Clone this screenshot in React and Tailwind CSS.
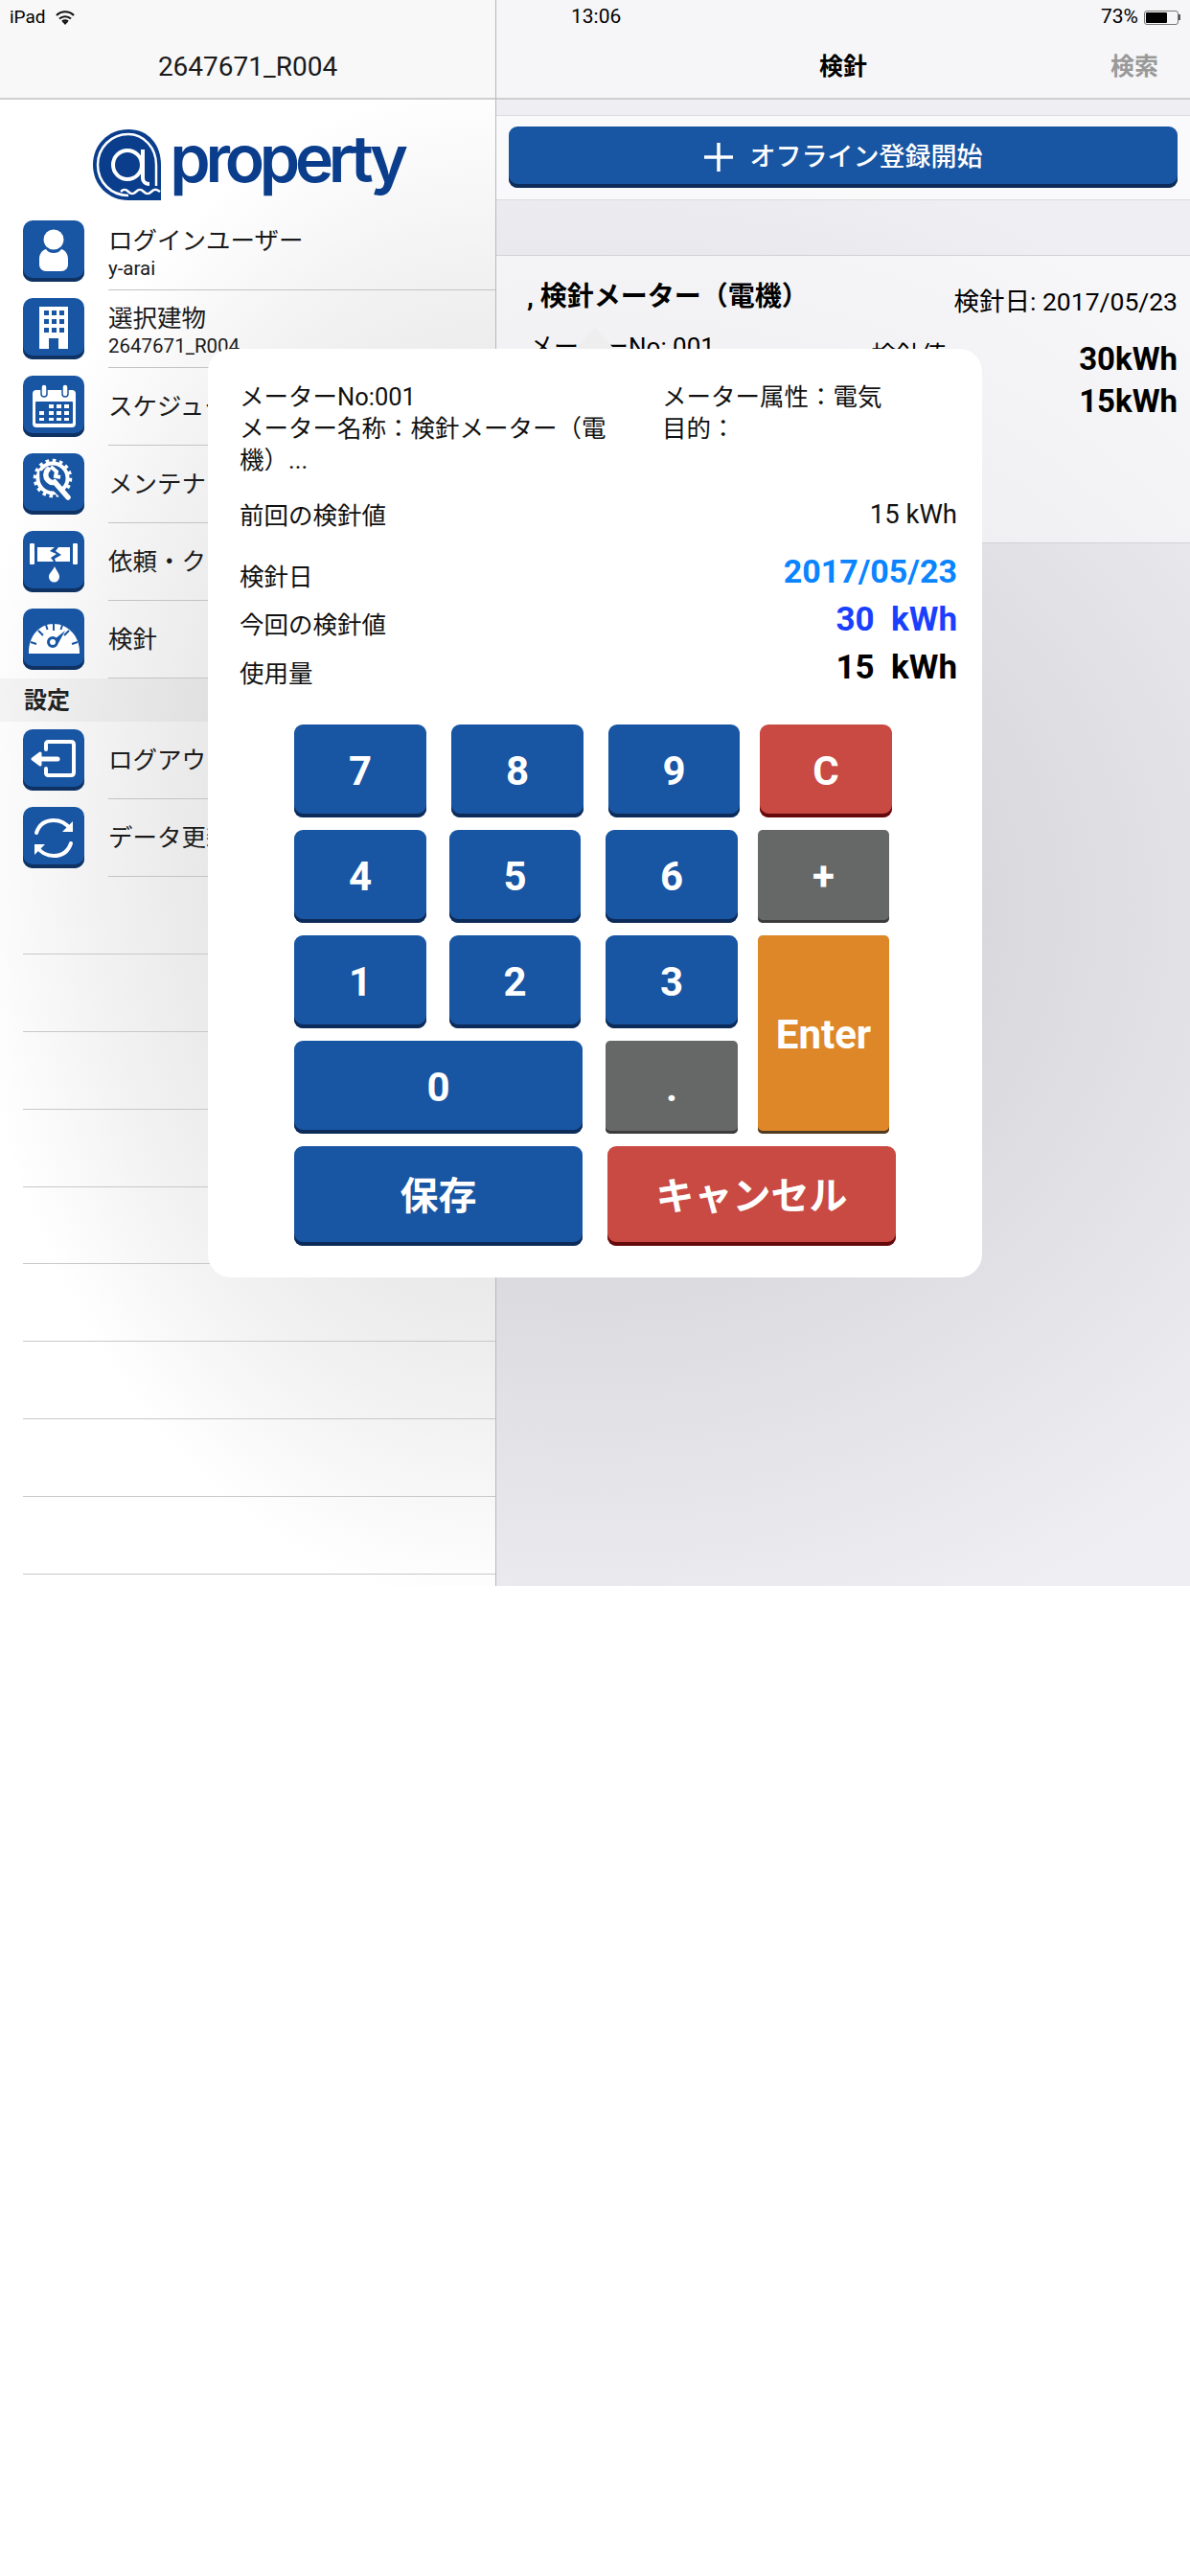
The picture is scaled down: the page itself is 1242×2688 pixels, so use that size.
const FONT = "font-['Roboto','Noto_Sans_CJK_JP',sans-serif]"

function IconBox({ children }) {
  return (
    <div className="w-16 h-16 shrink-0 rounded-[10px] bg-[#1855a3] shadow-[inset_0_-4px_0_#0f3263] overflow-hidden">
      <svg viewBox="0 0 64 64" className="w-16 h-16">{children}</svg>
    </div>
  )
}

const icons = {
  user: (
    <g fill="#fff">
      <circle cx="32" cy="20" r="10.5" />
      <path d="M24 30c2 3 5 4 8 4s6-1 8-4c4 1 7 5 7 10v6c0 4-3 7-7 7H24c-4 0-7-3-7-7v-6c0-5 3-9 7-10z" />
    </g>
  ),
  building: (
    <g>
      <path fill="#fff" d="M17 9h30v44H37V42H27v11H17z" />
      <path fill="#1855a3" d="M22 13h5v5h-5zM30 13h5v5h-5zM38 13h5v5h-5zM22 22h5v5h-5zM30 22h5v5h-5zM38 22h5v5h-5zM22 31h5v5h-5zM30 31h5v5h-5zM38 31h5v5h-5z" />
    </g>
  ),
  calendar: (
    <g>
      <rect x="10" y="15" width="45" height="39" rx="4" fill="#fff" />
      <rect x="13" y="27" width="39" height="23" rx="1" fill="#1855a3" />
      <rect x="19" y="9" width="6" height="13" rx="3" fill="#fff" stroke="#1855a3" strokeWidth="1.5" />
      <rect x="41" y="9" width="6" height="13" rx="3" fill="#fff" stroke="#1855a3" strokeWidth="1.5" />
      <path fill="#fff" d="M35 30h5v4h-5zM43 30h5v4h-5zM27 30h5v4h-5zM17 37h5v4h-5zM27 37h5v4h-5zM35 37h5v4h-5zM43 37h5v4h-5zM17 44h5v3h-5zM27 44h5v3h-5zM35 44h5v3h-5zM43 44h5v3h-5z" />
    </g>
  ),
  gear: (
    <g>
      <circle cx="31" cy="26" r="15.5" fill="none" stroke="#fff" strokeWidth="4" />
      <circle cx="31" cy="26" r="18.5" fill="none" stroke="#fff" strokeWidth="3.5" strokeDasharray="3.6 3.6" />
      <path d="M22 19c-1 5 1 9 5 11l3 1 16 16" fill="none" stroke="#1855a3" strokeWidth="9" />
      <path d="M26 17c-3 3-3 8 0 11 2 2 5 3 7 2l14 16" fill="none" stroke="#fff" strokeWidth="5.5" strokeLinecap="round" />
      <path d="M29 14l6 5-1 5 5 1" fill="none" stroke="#fff" strokeWidth="4" />
    </g>
  ),
  pipe: (
    <g fill="#fff">
      <rect x="7" y="13" width="5" height="22" rx="1" />
      <rect x="52" y="13" width="5" height="22" rx="1" />
      <path d="M15 17h18l-5 4 7 3-6 4 3 4H15zM37 17h12v15H34l-1-3 7-4-6-4z" />
      <path d="M33 37c2 5 5 7 5 11a5.200 5.200 0 01-11 0c0-4 4-6 6-11z" />
    </g>
  ),
  gauge: (
    <g>
      <path d="M6 45c0-16 11-29 26-29s27 13 27 29z" fill="#fff" />
      <path d="M6 46h53" stroke="#fff" strokeWidth="2" />
      <path d="M32 16v7M16 23l5 5M48 23l-5 5M8 35l6 2M57 35l-6 2M24 17l1.500 5M41 17l-1.500 5" stroke="#1855a3" strokeWidth="2" />
      <circle cx="31" cy="35" r="4.500" fill="none" stroke="#1855a3" strokeWidth="3" />
      <path d="M33 32l11-9-7 13z" fill="#1855a3" />
    </g>
  ),
  logout: (
    <g fill="none" stroke="#fff" strokeWidth="4" strokeLinecap="round" strokeLinejoin="round">
      <path d="M24 21v-6c0-1 1-2 2-2h24c2 0 3 1 3 3v29c0 2-1 3-3 3H26c-1 0-2-1-2-2v-5" />
      <path d="M36 31H14" strokeWidth="5" />
      <path d="M18 25l-8 6 8 6z" fill="#fff" strokeWidth="3" />
    </g>
  ),
  refresh: (
    <g fill="none" stroke="#fff" strokeWidth="4" strokeLinecap="round">
      <path d="M14 27c3-9 10-13 18-13 7 0 13 3 17 9" />
      <path d="M50 38c-3 9-10 13-18 13-7 0-13-3-17-9" />
      <path d="M52 15v11H41z" fill="#fff" stroke="none" />
      <path d="M12 50V39h11z" fill="#fff" stroke="none" />
    </g>
  ),
}

function MenuRow({ icon, label, sub }) {
  return (
    <div className="flex h-[81px] pl-6">
      <div className="pt-2"><IconBox>{icons[icon]}</IconBox></div>
      <div className="ml-[25px] flex-1 border-b border-[#c4c4c4] flex flex-col justify-center">
        {sub ? (
          <div className="mt-[1px]">
            <div className="text-[25.5px] leading-[34px] text-[#1a1a1a]">{label}</div>
            <div className="text-[20.5px] leading-[24px] text-[#1a1a1a]">{sub}</div>
          </div>
        ) : (
          <div className="text-[25.5px] leading-[34px] text-[#1a1a1a]">{label}</div>
        )}
      </div>
    </div>
  )
}

function Key({ label, className }) {
  return (
    <button className={'flex items-center justify-center rounded-[9px] text-white font-bold text-[42px] ' + className}>
      {label}
    </button>
  )
}

const BLUE = 'bg-[#1855a3] shadow-[inset_0_-4px_0_#0d2b58]'
const RED = 'bg-[#c84a42] shadow-[inset_0_-4px_0_#650a0c]'
const GREY = 'bg-[#666867] shadow-[inset_0_-3px_0_#3c3c3c] !rounded-[5px]'
const ORANGE = 'bg-[#de8728] shadow-[inset_0_-3px_0_#4f3a22] !rounded-[5px]'

export default function App() {
  return (
    <div className={'relative bg-white min-h-screen ' + FONT}>
      <div className="flex h-[1655px] text-black">
        {/* side menu */}
        <div className="w-[518px] shrink-0 border-r border-[#b8b8b8] bg-[radial-gradient(ellipse_560px_800px_at_520px_880px,#e2e2e2_40%,#f3f3f3_78%,#ffffff_100%)]">
          <div className="h-[104px] bg-[#f8f8f8] border-b-2 border-[#d0d0d0] relative">
            <div className="h-[36px] flex items-center pl-[10px] gap-[10px] text-[19px]">
              <span>iPad</span>
              <svg viewBox="0 0 20 15" className="w-5 h-[15px]" fill="none" stroke="#111" strokeWidth="2.200">
                <path d="M1 5c5-5 13-5 18 0M4 8.500c3.500-3 8.500-3 12 0M7 11.500c2-1.500 4-1.500 6 0" />
                <path d="M10 15l-2.500-3c1.500-1 3.500-1 5 0z" fill="#111" stroke="none" />
              </svg>
            </div>
            <div className="text-center text-[28px] leading-[36px] mt-[16px] text-[#1a1a1a]">2647671_R004</div>
          </div>
          <div className="h-[118px] flex items-start justify-center pt-[30px]">
            <svg viewBox="0 0 76 76" className="w-[76px] h-[76px] shrink-0">
              <path d="M38 1C17 1 1 17 1 38s16 37 37 37h34V38C72 17 59 1 38 1z" fill="#0a3d8c" />
              <path d="M67 60V38C67 20 54 6 38 6 20 6 6 20 6 38s14 32 32 32" fill="none" stroke="#fff" strokeWidth="2.500" />
              <circle cx="37" cy="38" r="15" fill="none" stroke="#fff" strokeWidth="4" />
              <path d="M53 22v30c0 4 3 6 7 6" fill="none" stroke="#fff" strokeWidth="4" />
              <path d="M30 66c3-3 5-3 8 0s5 3 8 0 5-3 8 0 5 3 8 0 5-3 9 0" fill="none" stroke="#fff" strokeWidth="2.500" />
            </svg>
            <span className="text-[68px] leading-[72px] font-semibold tracking-[-5.300px] text-[#0a3d8c] ml-[5px] font-['Inter',sans-serif] -mt-[5px]">property</span>
          </div>
          <MenuRow icon="user" label="ログインユーザー" sub="y-arai" />
          <MenuRow icon="building" label="選択建物" sub="2647671_R004" />
          <MenuRow icon="calendar" label="スケジュール" />
          <MenuRow icon="gear" label="メンテナンス" />
          <MenuRow icon="pipe" label="依頼・クレーム" />
          <MenuRow icon="gauge" label="検針" />
          <div className="h-[45px] bg-[#00000009] flex items-center pl-[25px] text-[24px] font-bold text-[#222]">設定</div>
          <MenuRow icon="logout" label="ログアウト" />
          <MenuRow icon="refresh" label="データ更新" />
          {[0, 1, 2, 3, 4, 5, 6, 7, 8].map(i => (
            <div key={i} className="h-[80.900px] ml-6 border-b border-[#c8c8c8]" />
          ))}
        </div>

        {/* meter reading list */}
        <div className="flex-1 bg-[radial-gradient(ellipse_1000px_850px_at_100px_950px,#d4d4d9_30%,#eeeef3_95%)]">
          <div className="h-[104px] bg-[#f6f6f8] border-b-2 border-[#cfcfd2]">
            <div className="h-[36px] relative flex items-center justify-between pl-[78px] pr-[10px] text-[21px]">
              <span>13:06</span>
              <div className="flex items-center gap-[6px]">
                <span>73%</span>
                <div className="flex items-center">
                  <div className="w-[36px] h-[15px] rounded-[3px] border border-[#777] p-[1px]">
                    <div className="w-[70%] h-full bg-black rounded-[1px]" />
                  </div>
                  <div className="w-[2px] h-[6px] bg-[#555]" />
                </div>
              </div>
            </div>
            <div className="flex items-center justify-between mt-[16px] h-[36px] pl-[337px] pr-[33px]">
              <span className="text-[25px] font-bold">検針</span>
              <span className="text-[25px] font-bold text-[#999]">検索</span>
            </div>
          </div>
          <div className="h-[16px]" />
          <div className="h-[89px] bg-white/70 border-y border-[#dcdcdf] px-[13px] pt-[11px]">
            <div className="h-16 rounded-[9px] bg-[#1855a3] shadow-[inset_0_-4px_0_#0d2b58] flex items-center justify-center text-white text-[27px] font-medium">
              <svg viewBox="0 0 30 30" className="w-[30px] h-[30px] mr-[18px]" stroke="#fff" strokeWidth="3.500">
                <path d="M15 0v30M0 15h30" />
              </svg>
              オフライン登録開始
            </div>
          </div>
          <div className="h-[57px]" />
          <div className="h-[301px] bg-white/50 border-y border-[#d2d2d6] pl-[32px] pr-[13px]">
            <div className="flex justify-between">
              <span className="text-[28px] font-bold leading-[40px] mt-[23px]">, 検針メーター（電機）</span>
              <span className="text-[26.5px] leading-[36px] mt-[30px]">検針日: 2017/05/23</span>
            </div>
            <div className="flex items-start">
              <span className="text-[26px] ml-[2px] mt-[11px] leading-[36px]">メーターNo: 001</span>
              <span className="text-[26px] ml-auto mr-[139px] mt-[20px] leading-[36px]">検針値</span>
              <div className="flex flex-col items-end font-bold text-[33px] leading-[44px] mt-[20px]">
                <span>30kWh</span>
                <span>15kWh</span>
              </div>
            </div>
          </div>
        </div>
      </div>

      {/* popover */}
      <div className="absolute left-[217px] top-[364px] w-[808px] h-[969px] bg-white rounded-[24px] pt-[34px] text-[25.500px] leading-[33px] text-[#111]">
        <div className="absolute left-[384px] -top-[22px] w-0 h-0 border-x-[20px] border-x-transparent border-b-[22px] border-b-[#eeeeef]" />
        <div className="flex pl-[33px]">
          <div className="w-[441px] pr-[50px]">
            <div>メーターNo:001</div>
            <div>メーター名称：検針メーター（電機）...</div>
          </div>
          <div>
            <div>メーター属性：電気</div>
            <div>目的：</div>
          </div>
        </div>
        <div className="pr-[26px] pl-[33px]">
          <div className="flex items-center justify-between h-[40px] mt-[19px]">
            <span className="mt-[4px]">前回の検針値</span>
            <span className="text-[27.5px]">15 kWh</span>
          </div>
          <div className="flex items-center justify-between h-[50px] mt-[15px]">
            <span className="mt-[13px]">検針日</span>
            <span className="text-[34px] font-bold text-[#0a84ff]">2017/05/23</span>
          </div>
          <div className="flex items-center justify-between h-[50px]">
            <span className="mt-[13px]">今回の検針値</span>
            <span className="text-[35px] font-bold text-[#1a3fff] whitespace-pre">30  kWh</span>
          </div>
          <div className="flex items-center justify-between h-[50px]">
            <span className="mt-[14px]">使用量</span>
            <span className="text-[35px] font-bold text-black whitespace-pre">15  kWh</span>
          </div>
        </div>

        {/* keypad */}
        <div className="ml-[90px] mt-[35px] flex flex-col gap-[13px]">
          <div className="flex h-[97px]">
            <Key label="7" className={'w-[138px] ' + BLUE} />
            <Key label="8" className={'w-[138px] ml-[26px] ' + BLUE} />
            <Key label="9" className={'w-[137px] ml-[26px] ' + BLUE} />
            <Key label="C" className={'w-[138px] ml-[21px] ' + RED} />
          </div>
          <div className="flex h-[97px]">
            <Key label="4" className={'w-[138px] ' + BLUE} />
            <Key label="5" className={'w-[137px] ml-[24px] ' + BLUE} />
            <Key label="6" className={'w-[138px] ml-[26px] ' + BLUE} />
            <Key label="+" className={'w-[137px] ml-[21px] ' + GREY} />
          </div>
          <div className="flex h-[207px]">
            <div className="w-[463px] flex flex-col gap-[13px]">
              <div className="flex h-[97px]">
                <Key label="1" className={'w-[138px] ' + BLUE} />
                <Key label="2" className={'w-[137px] ml-[24px] ' + BLUE} />
                <Key label="3" className={'w-[138px] ml-[26px] ' + BLUE} />
              </div>
              <div className="flex h-[97px]">
                <Key label="0" className={'w-[301px] ' + BLUE} />
                <Key label="." className={'w-[138px] ml-[24px] ' + GREY} />
              </div>
            </div>
            <Key label="Enter" className={'w-[137px] ml-[21px] ' + ORANGE} />
          </div>
          <div className="flex h-[104px]">
            <Key label="保存" className={'w-[301px] !text-[40px] ' + BLUE} />
            <Key label="キャンセル" className={'w-[301px] ml-[26px] !text-[40px] ' + RED} />
          </div>
        </div>
      </div>
    </div>
  )
}
